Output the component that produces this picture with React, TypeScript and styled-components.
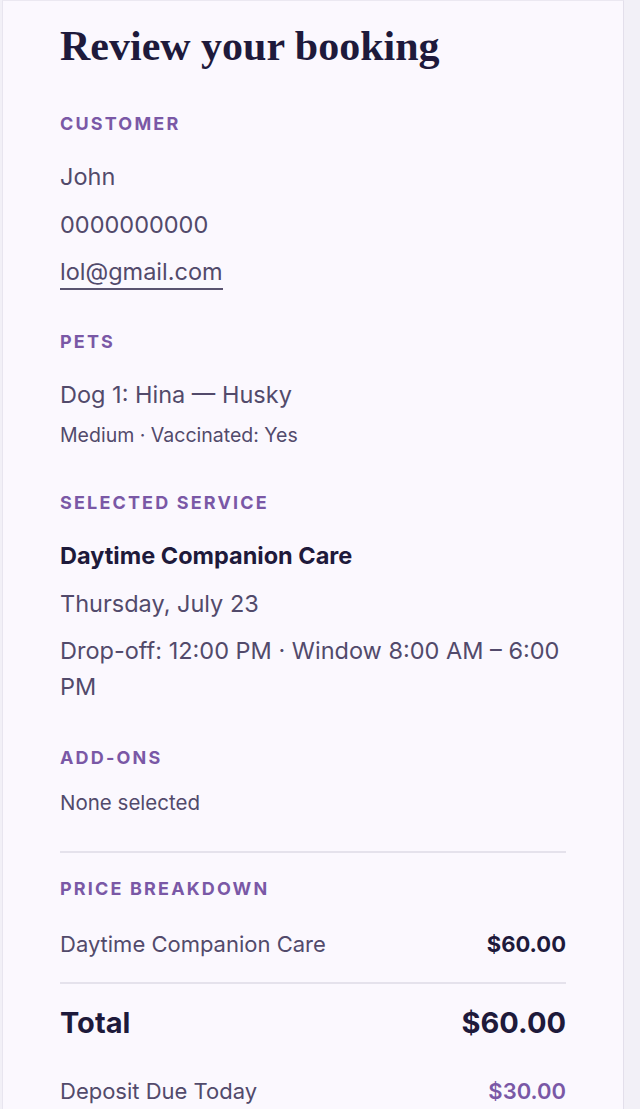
import React from 'react';
import styled, { createGlobalStyle } from 'styled-components';

const GlobalStyle = createGlobalStyle`
  html, body {
    margin: 0;
    padding: 0;
    background: #f2f0f7;
  }
  body {
    font-family: Inter, 'Noto Sans', sans-serif;
    -webkit-font-smoothing: antialiased;
  }
`;

const Page = styled.div`
  display: flex;
  min-height: 1109px;
  padding-left: 2px;
`;

const Card = styled.div`
  width: 622px;
  box-sizing: border-box;
  background: #fbf8fe;
  border-top: 1px solid #ebe8f1;
  border-left: 1px solid #e8e5ef;
  border-right: 1px solid #e3dfeb;
  padding: 21px 57px 0 57px;
`;

const Title = styled.h1`
  margin: 0;
  font-family: 'Liberation Serif', 'DejaVu Serif', serif;
  font-weight: 700;
  font-size: 42px;
  line-height: 48px;
  color: #1e1a3b;
`;

const Section = styled.section<{ $top: number }>`
  margin-top: ${(p) => p.$top}px;
`;

const Label = styled.div`
  font-size: 18px;
  line-height: 20px;
  font-weight: 700;
  letter-spacing: 0.12em;
  text-transform: uppercase;
  color: #7a58a6;
`;

const Line = styled.div<{ $strong?: boolean; $first?: boolean }>`
  font-size: 23.5px;
  line-height: 36px;
  color: ${(p) => (p.$strong ? '#1e1a3b' : '#524a6b')};
  font-weight: ${(p) => (p.$strong ? 700 : 400)};
  margin-top: ${(p) => (p.$first ? '25px' : '11.5px')};
`;

const SubLine = styled.div`
  font-size: 19.5px;
  line-height: 28px;
  color: #524a6b;
  margin-top: 8px;
`;

const Email = styled.span`
  display: inline-block;
  line-height: 33px;
  border-bottom: 2px solid #5a5370;
`;

const Muted = styled.div`
  font-size: 20.5px;
  line-height: 28px;
  color: #524a6b;
  margin-top: 21px;
`;

const Divider = styled.hr<{ $top: number }>`
  border: none;
  height: 2px;
  background: #e5e2ec;
  margin: ${(p) => p.$top}px 0 0 0;
`;

const PriceSection = styled.section`
  margin-top: 26px;
`;

const Row = styled.div<{ $size: number; $height: number; $top: number }>`
  display: flex;
  justify-content: space-between;
  align-items: center;
  font-size: ${(p) => p.$size}px;
  line-height: ${(p) => p.$height}px;
  margin-top: ${(p) => p.$top}px;
`;

const RowLabel = styled.span<{ $bold?: boolean }>`
  color: ${(p) => (p.$bold ? '#1e1a3b' : '#524a6b')};
  font-weight: ${(p) => (p.$bold ? 700 : 400)};
`;

const RowValue = styled.span<{ $accent?: boolean }>`
  color: ${(p) => (p.$accent ? '#7a58a6' : '#1e1a3b')};
  font-weight: ${(p) => (p.$accent ? 600 : 700)};
`;

const App = () => {
  return (
    <>
      <GlobalStyle />
      <Page>
        <Card>
          <Title>Review your booking</Title>

          <Section $top={44}>
            <Label>Customer</Label>
            <Line $first>John</Line>
            <Line>0000000000</Line>
            <Line>
              <Email>lol@gmail.com</Email>
            </Line>
          </Section>

          <Section $top={42}>
            <Label>Pets</Label>
            <Line $first>Dog 1: Hina — Husky</Line>
            <SubLine>Medium · Vaccinated: Yes</SubLine>
          </Section>

          <Section $top={44}>
            <Label>Selected Service</Label>
            <Line $first $strong>
              Daytime Companion Care
            </Line>
            <Line>Thursday, July 23</Line>
            <Line>Drop-off: 12:00 PM · Window 8:00 AM – 6:00 PM</Line>
          </Section>

          <Section $top={43}>
            <Label>Add-ons</Label>
            <Muted>None selected</Muted>
          </Section>

          <Divider $top={34} />

          <PriceSection>
            <Label>Price Breakdown</Label>
            <Row $size={22} $height={36} $top={27}>
              <RowLabel>Daytime Companion Care</RowLabel>
              <RowValue>$60.00</RowValue>
            </Row>
          </PriceSection>

          <Divider $top={20} />

          <Row $size={29} $height={40} $top={19}>
            <RowLabel $bold>Total</RowLabel>
            <RowValue>$60.00</RowValue>
          </Row>

          <Row $size={22} $height={36} $top={30}>
            <RowLabel>Deposit Due Today</RowLabel>
            <RowValue $accent>$30.00</RowValue>
          </Row>
        </Card>
      </Page>
    </>
  );
};

export default App;
